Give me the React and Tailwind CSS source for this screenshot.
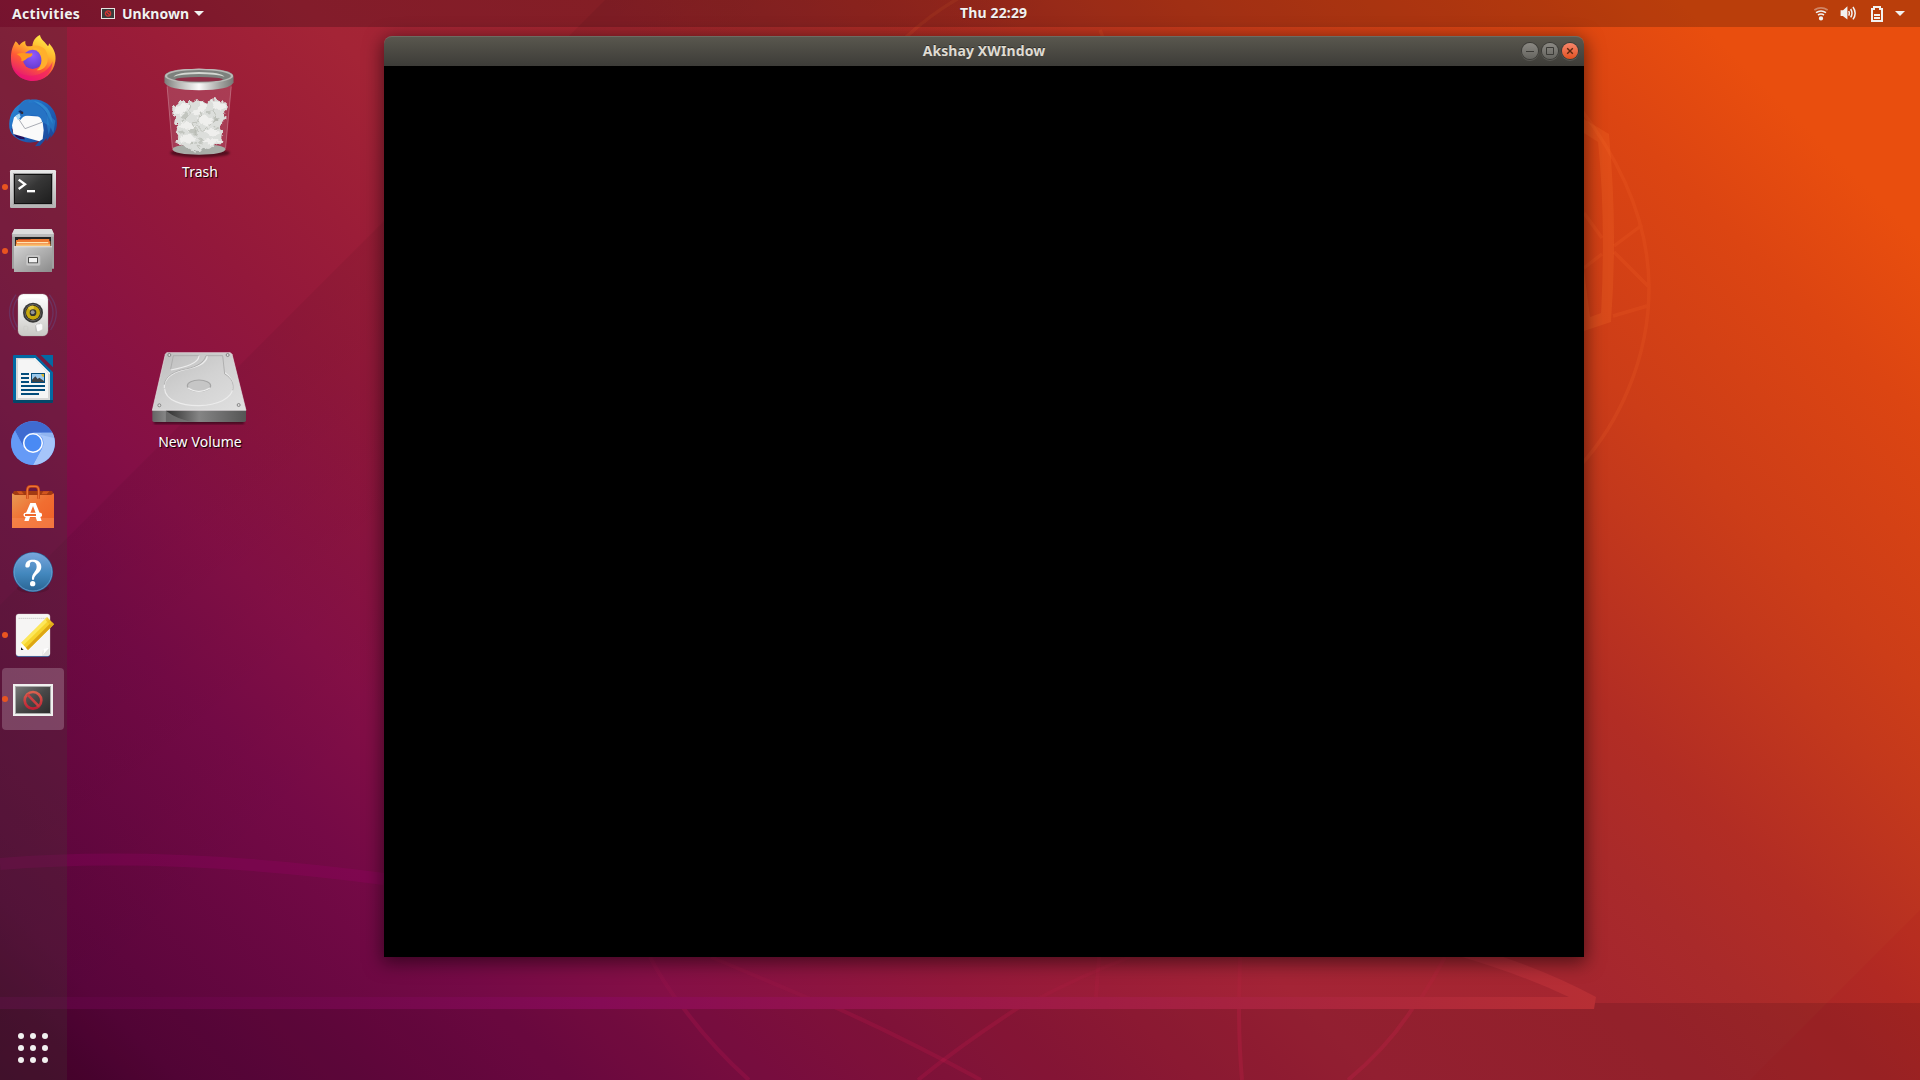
import React from "react";

function Wallpaper() {
  return (
    <svg className="absolute inset-0 size-full" viewBox="0 0 1920 1080" fill="none">
      <path d="M605 0L0 605V1080H1080V0Z" fill="url(#fold)" />
      <path d="M1920 910V1080H1750Z" fill="#b00020" opacity=".07" />
      <path d="M0 1003H1920V1080H0Z" fill="#200010" opacity=".13" />
      <g stroke="#ff2060" strokeWidth="4">
        <path opacity=".05" d="M650 957Q662 980 679 1003" />
        <path opacity=".13" d="M682 1006Q710 1045 749 1080" />
        <path opacity=".05" d="M711 957L820 1003" />
        <path opacity=".13" d="M832 1006Q900 1036 981 1080" />
        <path opacity=".05" d="M1130 957Q1080 976 1030 1003" />
        <path opacity=".13" d="M1021 1006Q962 1044 918 1080" />
        <path opacity=".06" d="M1099 957L1096 997M1240 957L1239 1003M1445 957Q1433 980 1418 1003" />
        <path opacity=".14" d="M1239 1006Q1239 1045 1242 1080M1414 1006Q1389 1046 1348 1080" />
      </g>
      <path d="M0 864Q165 850 384 879" stroke="#a0006c" strokeWidth="12" opacity=".24" />
      <path d="M0 997H1569Q1520 974 1462 957H1503Q1553 974 1596 997L1594 1009H0Z" fill="url(#ribbon)" />
      <g stroke="#ff7030" strokeWidth="3.4" opacity=".14">
        <path d="M1580 108C1618 158 1649 220 1649 288C1649 360 1618 424 1580 466" />
        <path d="M1642 225L1614 246M1602 254L1584 268M1584 213L1602 238M1614 252L1648 286M1613 316L1647 306" />
        <path d="M905 38Q935 10 970 -8M1100 30L1104 40" />
      </g>
      <path
        d="M1584 119L1609 134Q1618 230 1611 322L1584 331V270L1590 317L1601 313Q1606 220 1598 142L1584 133Z"
        fill="#ff7830"
        opacity=".19"
      />
      <defs>
        <linearGradient id="fold" gradientUnits="userSpaceOnUse" x1="302" y1="302" x2="560" y2="560">
          <stop stopOpacity=".055" />
          <stop offset="1" stopOpacity="0" />
        </linearGradient>
        <linearGradient id="ribbon" gradientUnits="userSpaceOnUse" x1="0" y1="0" x2="1600" y2="0">
          <stop stopColor="#58043e" />
          <stop offset=".375" stopColor="#850b55" />
          <stop offset=".6" stopColor="#9b1749" />
          <stop offset=".78" stopColor="#a7233f" />
          <stop offset="1" stopColor="#b72f34" />
        </linearGradient>
      </defs>
    </svg>
  );
}

const icons = [
  {
    name: "Firefox",
    box: "6 84 186 186",
    art: (
      <>
        <defs>
          <linearGradient id="ffa" x1=".8" y1="0" x2=".3" y2="1">
            <stop stopColor="#fff44f" />
            <stop offset=".35" stopColor="#ffb62c" />
            <stop offset=".62" stopColor="#ff5a36" />
            <stop offset="1" stopColor="#e3107a" />
          </linearGradient>
          <radialGradient id="ffb" cx=".5" cy=".3" r=".8">
            <stop stopColor="#9059ff" />
            <stop offset="1" stopColor="#6038c8" />
          </radialGradient>
        </defs>
        <path
          d="M47 124C52 128 55 133 58 136C64 128 71 124 76 123C75 130 77 136 82 139H97C98 123 107 110 120 105C122 119 138 128 144 139C146 137 147 134 147 130C163 147 169 164 166 184C161 219 133 243 99 243C62 243 33 215 33 177C32 155 38 138 47 124Z"
          fill="url(#ffa)"
        />
        <circle cx="98" cy="178" r="29" fill="url(#ffb)" />
        <path d="M82 150C95 140 116 142 127 159C119 154 114 153 111 153C129 165 129 199 110 211C142 211 152 176 136 149C128 139 108 133 94 139Z" fill="#ffb02c" />
        <path d="M50 162C65 156 79 161 97 160C99 171 88 171 80 176C71 184 65 184 64 183C67 173 59 169 50 162Z" fill="#ff981e" />
        <path d="M34 190C46 225 86 235 119 222C139 214 153 198 158 184C156 222 130 243 99 243C65 243 37 220 34 190Z" fill="#ee1271" opacity=".55" />
      </>
    ),
  },
  {
    name: "Thunderbird",
    box: "6 276 186 186",
    art: (
      <>
        <defs>
          <linearGradient id="tb" x1="0" y1="0" x2="1" y2="1">
            <stop stopColor="#2d8fd8" />
            <stop offset=".45" stopColor="#1f66be" />
            <stop offset="1" stopColor="#1b3f8e" />
          </linearGradient>
        </defs>
        <path d="M60 312C68 301 78 296 91 299C137 293 172 327 171 371C170 390 162 404 150 414L153 404L140 424V414L120 437L105 439L120 421C80 440 32 414 28 383C25 353 37 326 60 312Z" fill="url(#tb)" />
        <path d="M34 385Q42 420 75 418L66 401Z" fill="#25105c" />
        <path d="M42 352L52 345L126 350L131 390L128 417L118 424L40 402L36 376Z" fill="#fafafa" />
        <path d="M50 348L75 386L126 367" fill="none" stroke="#a9acb4" strokeWidth="3" />
        <path d="M55 346C51 322 66 298 91 299C84 304 85 306 87 308C115 309 140 330 142 352L149 378L126 365C124 350 108 341 88 345C72 347 66 352 62 360L55 354Z" fill="#2673c4" />
        <path d="M100 303C134 306 157 334 158 372L146 350C138 330 122 315 100 303Z" fill="#3a9fdc" opacity=".6" />
        <path d="M142 340L166 362L160 400L152 382L146 404L140 372Z" fill="#2a86cf" opacity=".6" />
        <path d="M55 334L61 331L70 336L64 343Z" fill="#172d68" />
        <circle cx="67" cy="339" r="3" fill="#3b2b26" />
        <path d="M47 347L58 340L62 350L54 361Z" fill="#a5d7f3" />
      </>
    ),
  },
  {
    name: "Terminal",
    box: "6 468 186 186",
    running: true,
    art: (
      <>
        <defs>
          <linearGradient id="term" x1="0" y1="0" x2="1" y2="1">
            <stop stopColor="#626262" />
            <stop offset=".45" stopColor="#363636" />
            <stop offset="1" stopColor="#1e1e1e" />
          </linearGradient>
          <linearGradient id="frame" x1="0" y1="0" x2="0" y2="1">
            <stop stopColor="#e8e8e8" />
            <stop offset="1" stopColor="#b3b3b3" />
          </linearGradient>
        </defs>
        <rect x="30" y="510" width="138" height="114" rx="4" fill="url(#frame)" />
        <rect x="39" y="519" width="120" height="96" fill="#a2a2a2" />
        <rect x="42" y="522" width="114" height="90" fill="#111" />
        <rect x="45" y="525" width="108" height="84" fill="url(#term)" />
        <path d="M56 539L75 553L56 567" fill="none" stroke="#fff" strokeWidth="7" />
        <path d="M81 570H105V577H81Z" fill="#fff" />
      </>
    ),
  },
  {
    name: "Files",
    box: "6 0 186 186",
    running: true,
    art: (
      <>
        <defs>
          <linearGradient id="fl" x1="0" y1="0" x2="1" y2="1">
            <stop stopColor="#d2d2d2" />
            <stop offset="1" stopColor="#8b8b8b" />
          </linearGradient>
        </defs>
        <path d="M43 27H155L162 43V146H36V43Z" fill="#a1a1a1" />
        <path d="M43 27H155L162 42H36Z" fill="#dcdcdc" />
        <path d="M37 42H161V50H37Z" fill="#bcbcbc" />
        <rect x="45" y="51" width="108" height="32" fill="#222" />
        <path d="M54 57H146V63H54Z" fill="#c94a1f" />
        <path d="M48 60H90L94 57H148V64H151V81H47Z" fill="#ed7a32" />
        <path d="M51 66H145V70H51Z" fill="#ffe3b1" />
        <path d="M48 73H151V80H48Z" fill="#fac272" />
        <path d="M42 79H156V156H42Z" fill="url(#fl)" />
        <path d="M42 79H156V82H42Z" fill="#e3e3e3" />
        <rect x="78" y="105" width="43" height="32" rx="5" fill="#c7c7c7" stroke="#ababab" />
        <rect x="84" y="111" width="30" height="19" rx="2" fill="#4d4d4d" />
        <rect x="87" y="114" width="24" height="13" fill="#f2f2f2" />
      </>
    ),
  },
  {
    name: "Rhythmbox",
    box: "6 192 186 186",
    art: (
      <>
        <defs>
          <linearGradient id="rb" x1="0" y1="0" x2="0" y2="1">
            <stop stopColor="#fff" />
            <stop offset=".5" stopColor="#e5e5e3" />
            <stop offset="1" stopColor="#c9c9c5" />
          </linearGradient>
        </defs>
        <g fill="none" stroke="#5a62a8" strokeWidth="4" opacity=".3">
          <path d="M48 224Q10 275 46 330M148 224Q188 275 152 330M52 236Q26 277 52 322M146 236Q172 277 146 322" />
        </g>
        <rect x="54" y="222" width="90" height="126" rx="16" fill="url(#rb)" stroke="#a9a9a6" />
        <path d="M62 240Q99 226 136 240V232Q99 218 62 232Z" fill="#fff" />
        <circle cx="99" cy="278" r="30" fill="#383938" />
        <circle cx="99" cy="278" r="25" fill="#777" />
        <circle cx="99" cy="278" r="23" fill="#282315" />
        <circle cx="99" cy="278" r="21" fill="#c8a90d" />
        <path d="M83 264Q94 254 102 258L99 278Z" fill="#e5ca3c" />
        <circle cx="99" cy="278" r="10" fill="#343434" />
        <circle cx="98" cy="277" r="6" fill="#969696" />
        <path d="M106 314Q117 307 127 314V328Q118 335 112 333Z" fill="#fafafa" />
        <path d="M109 335L107 316Q112 310 120 311" fill="none" stroke="#aaa" strokeWidth="2" />
        <rect x="71" y="319" width="12" height="15" rx="2" fill="none" stroke="#cdcdc8" strokeWidth="2" />
      </>
    ),
  },
  {
    name: "LibreOffice Writer",
    box: "6 384 186 186",
    art: (
      <>
        <path d="M43 405H107L159 457V544Q159 549 154 549H43Q39 549 39 545V409Q39 405 43 405Z" fill="#0369a3" />
        <path d="M39 540H159V545Q159 549 155 549H43Q39 549 39 545Z" fill="#034769" />
        <path d="M122 405H159V442Z" fill="#0369a3" />
        <path d="M48 414H105L150 459V540H48Z" fill="#d7d7d7" />
        <path d="M54 418H104L144 460V534H54Z" fill="#f5f5f5" />
        <path d="M105 414L150 459V463L101 414Z" fill="#fff" />
        <path d="M63 459H87V465H63ZM63 471H87V477H63ZM63 483H87V489H63ZM63 495H135V501H63ZM63 507H135V513H63ZM63 519H117V525H63Z" fill="#034d7c" />
        <rect x="93" y="459" width="42" height="30" fill="#034d7c" />
        <rect x="96" y="462" width="36" height="24" fill="#9bc9ec" />
        <path d="M96 486V479L106 469L113 477L118 473L132 483V486Z" fill="#3f4245" />
        <path d="M124 462H132V471Q125 471 124 462Z" fill="#dbb52a" />
      </>
    ),
  },
  {
    name: "Chromium",
    box: "6 576 186 186",
    art: (
      <>
        <circle cx="99" cy="669" r="66" fill="#5f95f5" />
        <path d="M45 632A66 66 0 0 1 157 638H99A31 31 0 0 0 70 679Z" fill="#3f6bd0" />
        <path d="M99 638H157A66 66 0 0 1 99 735L126 685A31 31 0 0 0 118 644Z" fill="#a6c5fa" />
        <path d="M45 632A66 66 0 0 0 99 735L127 684L116 695L90 699L72 685Z" fill="#659af6" />
        <path d="M126 638H157L162 654L120 644Z" fill="#7ea5e6" opacity=".5" />
        <circle cx="99" cy="669" r="30" fill="#fff" />
        <circle cx="99" cy="669" r="25.5" fill="#4a8af4" />
      </>
    ),
  },
  {
    name: "Software",
    box: "6 48 186 186",
    art: (
      <>
        <defs>
          <linearGradient id="sw" x1="0" y1="0" x2="1" y2="1">
            <stop stopColor="#e89a54" />
            <stop offset=".5" stopColor="#f16e31" />
            <stop offset="1" stopColor="#ee6027" />
          </linearGradient>
        </defs>
        <path d="M42 93H156L162 105H36Z" fill="#a23a12" />
        <path d="M50 94L58 103H72L64 94ZM130 94L124 103H140L148 94Z" fill="#d2561f" />
        <path d="M36 100L45 105H153L162 100V204H36Z" fill="url(#sw)" />
        <path d="M36 174H162V204H36Z" fill="#f8915c" opacity=".45" />
        <path d="M82 116V91Q82 79 92 79H106Q116 79 116 91V116" fill="none" stroke="#c94513" strokeWidth="8" />
        <path d="M82 116V91Q82 79 92 79H106Q116 79 116 91V116" fill="none" stroke="#ea7439" strokeWidth="4" />
        <path d="M78 159L91 129H107L119 159H107L99 138L91 159ZM73 183L77 171H90L86 183ZM125 183L121 171H107L111 183Z" fill="#fff" />
        <rect x="71" y="158" width="55" height="13" rx="5" fill="#fff" />
        <rect x="75" y="162" width="33" height="6" fill="#ef6a2d" />
      </>
    ),
  },
  {
    name: "Help",
    box: "6 240 186 186",
    art: (
      <>
        <defs>
          <linearGradient id="hp" x1="0" y1="0" x2="0" y2="1">
            <stop stopColor="#78a5dc" />
            <stop offset=".55" stopColor="#4287bd" />
            <stop offset="1" stopColor="#2a6594" />
          </linearGradient>
        </defs>
        <ellipse cx="99" cy="385" rx="48" ry="14" fill="#000" opacity=".12" />
        <circle cx="99" cy="336" r="60" fill="#285f96" />
        <circle cx="99" cy="336" r="57" fill="url(#hp)" stroke="#80b1e0" strokeWidth="2" />
        <path
          d="M76 318C76 304 86 299 99 299C114 299 124 307 124 321C124 339 102 342 102 359H96C94 338 110 336 110 320C110 310 105 305 97 305C91 305 89 309 90 314C90 325 76 325 76 318Z"
          fill="#fff"
        />
        <circle cx="98" cy="371" r="8" fill="#fff" />
      </>
    ),
  },
  {
    name: "Text Editor",
    box: "6 432 186 186",
    running: true,
    art: (
      <>
        <rect x="48" y="465" width="102" height="126" rx="8" fill="#2c4c8c" />
        <rect x="48" y="462" width="102" height="126" rx="8" fill="#f6f5f4" stroke="#dad8d8" />
        <path d="M56 475H144" stroke="#bebcba" strokeWidth="3" strokeDasharray="3 3" />
        <path d="M126 588L129 569L148 561V580Q148 588 140 588Z" fill="#e2e1e0" />
        <path d="M126 587Q133 579 130 567L149 562Z" fill="#fff" />
        <path d="M64 548L63 570L84 569Z" fill="#fff" />
        <path d="M63 562V570H71Z" fill="#222" />
        <path d="M64 548L141 472L162 493L84 570Z" fill="#f6d32d" />
        <path d="M78 563L155 486L162 493L84 570Z" fill="#dda614" />
        <path d="M64 548L141 472L148 479L71 555Z" fill="#fde85a" />
        <path d="M141 472L162 493L152 496L138 482Z" fill="#e9b720" opacity=".6" />
      </>
    ),
  },
  {
    name: "Unknown",
    box: "6 624 186 186",
    running: true,
    active: true,
    art: (
      <>
        <defs>
          <linearGradient id="un" x1="0" y1="0" x2="1" y2="1">
            <stop stopColor="#777" />
            <stop offset=".5" stopColor="#484848" />
            <stop offset="1" stopColor="#2d2d2d" />
          </linearGradient>
          <linearGradient id="no" x1="0" y1="0" x2="0" y2="1">
            <stop stopColor="#d9614e" />
            <stop offset="1" stopColor="#bd2034" />
          </linearGradient>
        </defs>
        <rect x="39" y="672" width="120" height="96" fill="#f0f0ef" />
        <rect x="45" y="678" width="108" height="84" fill="#aaa" />
        <rect x="48" y="681" width="102" height="78" fill="url(#un)" />
        <circle cx="99" cy="721" r="25" fill="none" stroke="url(#no)" strokeWidth="8" />
        <path d="M82 703L117 739" stroke="#cc3e40" strokeWidth="8" />
      </>
    ),
  },
];

function Dock() {
  return (
    <nav className="flex h-full w-[67px] shrink-0 flex-col bg-[#463c34]/27 pt-px">
      <div className="flex flex-col gap-0.5 pl-0.5">
        {icons.map((it) => (
          <div
            key={it.name}
            className={
              it.active
                ? "relative size-[62px] rounded bg-white/20"
                : "relative size-[62px]"
            }
          >
            <svg viewBox={it.box} className="size-full">
              {it.art}
            </svg>
            {it.running && (
              <span className="absolute top-7 left-0 size-1.5 rounded-full bg-[#e95420]" />
            )}
          </div>
        ))}
      </div>
      <div className="mt-auto mb-[17px] ml-[18px] grid w-[30px] grid-cols-3 gap-1.5">
        {Array.from({ length: 9 }, (_, i) => (
          <span key={i} className="size-1.5 rounded-full bg-[#f2f1f0]" />
        ))}
      </div>
    </nav>
  );
}

function TrashIcon() {
  return (
    <svg viewBox="486 200 222 280" className="h-[93px] w-[74px]">
      <defs>
        <linearGradient id="rim" x1="0" y1="0" x2="1" y2="0">
          <stop stopColor="#7c7d7b" />
          <stop offset=".2" stopColor="#b5b6b3" />
          <stop offset=".5" stopColor="#fafafa" />
          <stop offset=".8" stopColor="#a4a5a2" />
          <stop offset="1" stopColor="#777876" />
        </linearGradient>
        <filter id="soft">
          <feGaussianBlur stdDeviation="4" />
        </filter>
        <filter id="crumple">
          <feTurbulence type="fractalNoise" baseFrequency=".07" numOctaves="3" seed="4" />
          <feDisplacementMap in="SourceGraphic" scale="18" xChannelSelector="R" yChannelSelector="G" />
          <feGaussianBlur stdDeviation="1" />
        </filter>
      </defs>
      <ellipse cx="600" cy="462" rx="90" ry="13" fill="#000" opacity=".45" filter="url(#soft)" />
      <path d="M499 250H696L677 452Q597 480 517 452Z" fill="#fff" opacity=".14" />
      <path d="M501 262L517 448M694 262L677 448" stroke="#e7bfc9" strokeWidth="2" opacity=".5" />
      <ellipse cx="597" cy="451" rx="80" ry="16" fill="#a8aca7" />
      <g filter="url(#crumple)">
        <path
          d="M516 325L530 321L537 310L549 305L558 311L568 304L578 313L592 303L611 306L622 314L632 300L642 296L654 305L671 307L684 319L681 332L670 343L677 356L668 370L661 384L667 396L664 412L672 425L661 436L640 441L627 450L612 446L600 460L582 457L568 449L552 444L532 435L526 424L535 414L527 399L534 387L522 370L525 353L517 342Z"
          fill="#dcdedb"
        />
        <path d="M531 322L567 309L562 335L542 349L521 341ZM568 345L591 333L603 307L622 318L615 336L590 345ZM632 303L664 311L680 322L662 335L641 326ZM590 355L618 348L640 370L624 383L602 374ZM548 366L571 372L590 386L565 399L537 382ZM607 395L640 388L664 403L634 413ZM543 410L569 404L589 418L573 435L540 428ZM606 423L636 419L666 428L625 440Z" fill="#efefed" />
        <path d="M562 335L542 355L559 366ZM615 336L626 348L641 334ZM640 370L660 358L641 350ZM565 399L590 409L598 396L580 385ZM589 418L606 436L612 420ZM537 390L552 401L543 410ZM640 388L651 380L661 390Z" fill="#c2c5bf" />
        <path d="M567 309L571 342L548 366M603 340L592 368L578 372L590 391L583 405M641 330L650 360L630 380M624 383L607 395L589 377M573 435L590 431L601 450" fill="none" stroke="#adb1a8" strokeWidth="2" />
      </g>
      <path d="M493 232Q493 208 597 208Q701 208 701 232V250Q690 273 597 273Q504 273 493 250Z" fill="url(#rim)" />
      <ellipse cx="597" cy="230" rx="103" ry="22" fill="#b9bab7" />
      <ellipse cx="597" cy="230" rx="96" ry="18" fill="#7d817d" />
      <path d="M520 232Q530 219 597 218Q664 219 674 232Q650 224 597 224Q544 224 520 232Z" fill="#d4d8d2" />
      <ellipse cx="597" cy="240" rx="72" ry="7" fill="#8f3048" />
    </svg>
  );
}

function DriveIcon() {
  return (
    <svg viewBox="450 392 294 231" className="h-[77px] w-[98px]">
      <defs>
        <linearGradient id="top" x1="0" y1="0" x2="1" y2="1">
          <stop stopColor="#bcbcbc" />
          <stop offset=".5" stopColor="#d2d2d2" />
          <stop offset="1" stopColor="#e0e0e0" />
        </linearGradient>
        <linearGradient id="front" x1="0" y1="0" x2="1" y2="0">
          <stop stopColor="#656565" />
          <stop offset=".14" stopColor="#858585" />
          <stop offset=".15" stopColor="#303030" />
          <stop offset=".5" stopColor="#858585" />
          <stop offset="1" stopColor="#555" />
        </linearGradient>
        <filter id="blur2">
          <feGaussianBlur stdDeviation="3" />
        </filter>
      </defs>
      <path d="M462 600H732V612H462Z" fill="#000" opacity=".45" filter="url(#blur2)" />
      <path d="M500 397H691L696 402L738 570H457L496 402Z" fill="url(#top)" stroke="#e6e6e6" strokeWidth="2" />
      <path d="M457 570H738V600Q738 605 733 605H462Q457 605 457 600Z" fill="url(#front)" />
      <path d="M498 571Q535 600 585 605H498Z" fill="#777" opacity=".8" />
      <path d="M457 570H738" stroke="#eee" strokeWidth="2" />
      <g fill="none" strokeWidth="3.5">
        <path stroke="#ececec" d="M494 505C497 575 698 572 699 500C699 478 688 466 675 457M622 406C620 432 587 441 553 448C510 458 492 477 493 503M513 449C555 440 596 430 597 406" />
        <path stroke="#a8a8a8" strokeWidth="2.5" d="M493 493C495 467 526 451 557 446C594 439 612 425 618 406H668L674 461C696 472 703 495 698 510M512 446L520 406H596" />
        <ellipse cx="597" cy="496" rx="35" ry="17" fill="#c6c6c6" stroke="#a5a5a5" />
        <path d="M563 502Q596 524 631 502" stroke="#eee" />
      </g>
      {[
        [508, 404],
        [683, 404],
        [478, 555],
        [716, 554],
      ].map(([cx, cy]) => (
        <circle key={cx} cx={cx} cy={cy} r="4.5" fill="#ddd" stroke="#777" strokeWidth="2.5" />
      ))}
    </svg>
  );
}

function TopBar() {
  return (
    <header className="relative grid h-[27px] shrink-0 grid-cols-3 items-center bg-black/20 text-[14px] leading-[25px] font-bold text-[#f2f1f0] [text-shadow:0_1px_1px_rgba(0,0,0,.35)]">
      <div className="flex items-center pl-3">
        <span className="w-[89px] tracking-[0.32px]">Activities</span>
        <svg viewBox="0 0 14 12" className="h-3 w-3.5">
          <rect x=".5" y=".5" width="13" height="10" fill="#3b3b3b" stroke="#e6e3e1" />
          <circle cx="7" cy="5.5" r="2.6" fill="none" stroke="#d63535" strokeWidth="1.3" />
          <path d="M5.5 4L8.7 7" stroke="#d63535" strokeWidth="1.3" />
        </svg>
        <span className="ml-[7px] w-[72px]">Unknown</span>
        <svg viewBox="0 0 10 5" className="h-[5px] w-2.5">
          <path d="M0 0H10L5 5Z" fill="#f2f1f0" />
        </svg>
      </div>
      <div className="-mt-0.5 pl-[320px] tracking-[0.15px] whitespace-nowrap">Thu 22:29</div>
      <div className="flex items-center justify-end pr-[15px]">
        <svg viewBox="939 15 48 51" className="h-[17px] w-4" fill="none" stroke="#f2f1f0" strokeWidth="5">
          <path d="M943 30Q963 17 983 30" opacity=".4" />
          <path d="M948 38Q963 28 978 38M954 45Q963 39 972 45" />
          <circle cx="963" cy="55" r="4" fill="#f2f1f0" />
        </svg>
        <svg viewBox="1020 15 51 51" className="ml-[11px] size-[17px]" fill="none" stroke="#f2f1f0" strokeWidth="4.5">
          <path d="M1024 33H1030L1040 24V54L1030 46H1024Z" fill="#f2f1f0" />
          <path d="M1046 33Q1050 40 1046 47M1052 27Q1060 40 1052 52M1059 21Q1072 40 1059 58" />
        </svg>
        <svg viewBox="1110 12 42 54" className="ml-[13px] h-[18px] w-3.5" fill="none" stroke="#f2f1f0" strokeWidth="6">
          <path d="M1116 24H1122V18H1140V24H1146V60H1116Z" />
          <path d="M1122 42H1140M1122 51H1140" />
        </svg>
        <svg viewBox="0 0 10 5" className="ml-[11px] h-[5px] w-2.5">
          <path d="M0 0H10L5 5Z" fill="#f2f1f0" />
        </svg>
      </div>
    </header>
  );
}

const buttonBase =
  "size-4 rounded-full shadow-[0_0_0_1px_#3b3a36,0_1px_0_1px_rgba(255,255,255,.12)]";

function AppWindow() {
  return (
    <section className="absolute top-9 left-[384px] flex h-[921px] w-[1200px] flex-col rounded-t-lg shadow-[0_4px_18px_2px_rgba(0,0,0,.5)]">
      <div className="flex h-[30px] shrink-0 items-center gap-1 rounded-t-lg border-t border-[#6d6b62] bg-linear-to-b from-[#59574e] to-[#3d3c38] pr-1.5 pb-px pl-[66px]">
        <h1 className="-mt-px flex-1 text-center text-[14px] leading-[27px] font-bold tracking-[0.1px] text-[#dfdbd2] [text-shadow:0_-1px_0_rgba(0,0,0,.4)]">
          Akshay XWIndow
        </h1>
        <svg viewBox="0 0 16 16" className={`${buttonBase} bg-linear-to-b from-[#8b8983] to-[#65645f]`}>
          <path d="M4 8.5H12" stroke="#3b3a36" />
        </svg>
        <svg viewBox="0 0 16 16" className={`${buttonBase} bg-linear-to-b from-[#8b8983] to-[#65645f]`}>
          <path d="M4.5 4.5H11.5V11.5H4.5Z" fill="none" stroke="#3b3a36" />
        </svg>
        <svg viewBox="0 0 16 16" className={`${buttonBase} bg-linear-to-b from-[#f7866a] to-[#e2501b]`}>
          <path d="M5.2 5.2L10.8 10.8M10.8 5.2L5.2 10.8" stroke="#5a2710" strokeWidth="1.4" />
        </svg>
      </div>
      <div className="flex-1 bg-black" />
    </section>
  );
}

export default function App() {
  return (
    <div className="relative flex h-[1080px] w-[1920px] flex-col overflow-hidden bg-[linear-gradient(45deg,#45032d_0%,#4c0331_2.7%,#59053b_6%,#750a46_19%,#840f46_25%,#93183b_35%,#9b1d38_40%,#a42436_46%,#a5262f_56%,#a92a2a_61%,#b22d24_66%,#c3381c_73%,#cc3d18_77%,#dc4512_86%,#e94e0e_92%)] font-['Noto_Sans',sans-serif]">
      <Wallpaper />
      <TopBar />
      <main className="relative flex min-h-0 flex-1">
        <Dock />
        <div className="flex w-[264px] flex-col items-center pt-[39px] text-[14px] leading-5 text-white [text-shadow:1px_1px_1px_#000]">
          <TrashIcon />
          <span className="mt-[3px] ml-0.5">Trash</span>
          <div className="mt-[169px] flex flex-col items-center">
            <DriveIcon />
            <span className="mt-1 ml-0.5 tracking-[0.1px]">New Volume</span>
          </div>
        </div>
      </main>
      <AppWindow />
    </div>
  );
}
